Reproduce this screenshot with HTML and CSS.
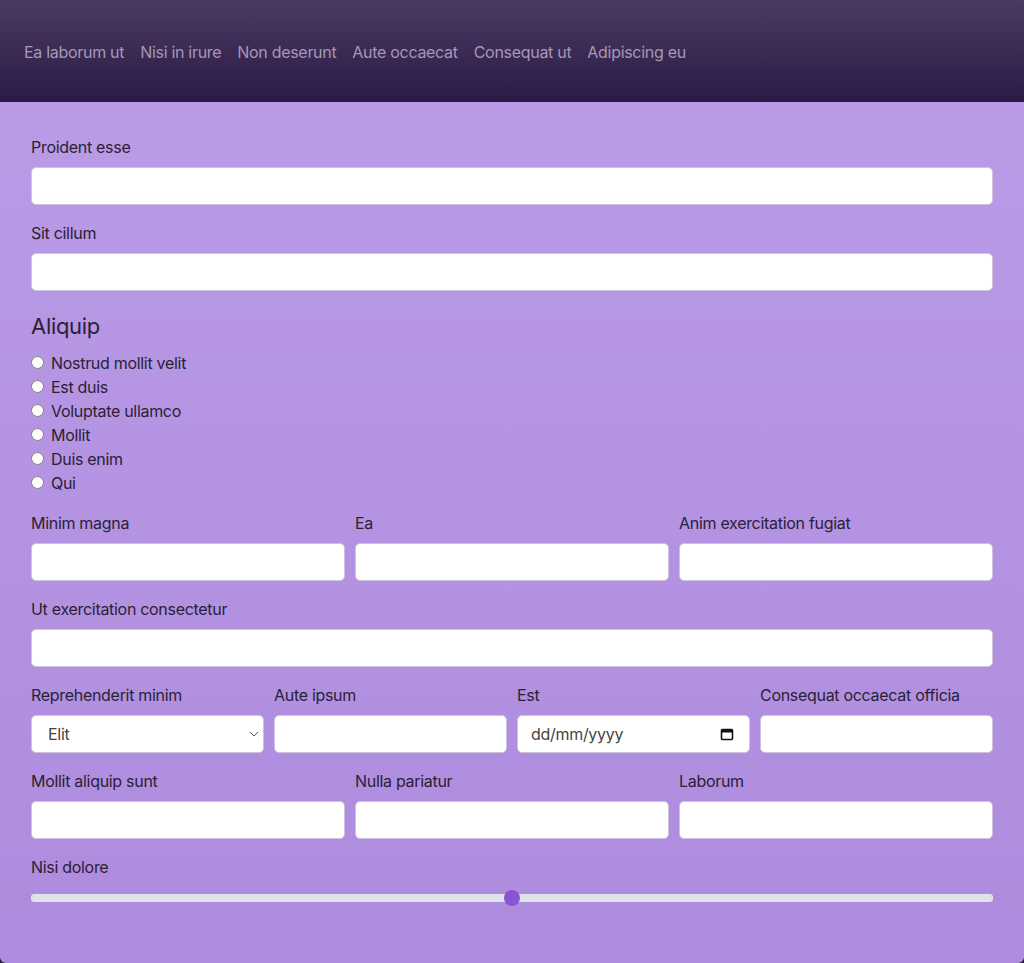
FILE: index.html
```html
<!DOCTYPE html>
<html lang="en">
<head>
<meta charset="utf-8">
<title>Form</title>
<link rel="stylesheet" href="styles.css">
</head>
<body>
<header class="topbar">
  <nav class="nav">
    <a href="#">Ea laborum ut</a>
    <a href="#">Nisi in irure</a>
    <a href="#">Non deserunt</a>
    <a href="#">Aute occaecat</a>
    <a href="#">Consequat ut</a>
    <a href="#">Adipiscing eu</a>
  </nav>
</header>
<main class="panel">
  <form class="form">
    <div class="field">
      <label class="label">Proident esse</label>
      <input class="input" type="text">
    </div>
    <div class="field">
      <label class="label">Sit cillum</label>
      <input class="input" type="text">
    </div>
    <fieldset class="group">
      <legend class="heading">Aliquip</legend>
      <label class="radio"><input type="radio" name="r"><span>Nostrud mollit velit</span></label>
      <label class="radio"><input type="radio" name="r"><span>Est duis</span></label>
      <label class="radio"><input type="radio" name="r"><span>Voluptate ullamco</span></label>
      <label class="radio"><input type="radio" name="r"><span>Mollit</span></label>
      <label class="radio"><input type="radio" name="r"><span>Duis enim</span></label>
      <label class="radio"><input type="radio" name="r"><span>Qui</span></label>
    </fieldset>
    <div class="row cols-3">
      <div class="field"><label class="label">Minim magna</label><input class="input" type="text"></div>
      <div class="field"><label class="label">Ea</label><input class="input" type="text"></div>
      <div class="field"><label class="label">Anim exercitation fugiat</label><input class="input" type="text"></div>
    </div>
    <div class="field">
      <label class="label">Ut exercitation consectetur</label>
      <input class="input" type="text">
    </div>
    <div class="row cols-4">
      <div class="field">
        <label class="label">Reprehenderit minim</label>
        <div class="select-wrap">
          <select class="input select"><option>Elit</option></select>
          <svg class="chev" width="10" height="6" viewBox="0 0 10 6"><path d="M1 1l4 4 4-4" fill="none" stroke="#555" stroke-width="1"/></svg>
        </div>
      </div>
      <div class="field"><label class="label">Aute ipsum</label><input class="input" type="text"></div>
      <div class="field">
        <label class="label">Est</label>
        <div class="date-wrap">
          <input class="input date" type="text" placeholder="dd/mm/yyyy">
          <svg class="cal" width="14" height="14" viewBox="0 0 14 14"><rect x="1.5" y="2.5" width="11" height="10" rx="1" fill="none" stroke="#111" stroke-width="1.6"/><rect x="1.5" y="2.5" width="11" height="3" fill="#111"/></svg>
        </div>
      </div>
      <div class="field"><label class="label">Consequat occaecat officia</label><input class="input" type="text"></div>
    </div>
    <div class="row cols-3">
      <div class="field"><label class="label">Mollit aliquip sunt</label><input class="input" type="text"></div>
      <div class="field"><label class="label">Nulla pariatur</label><input class="input" type="text"></div>
      <div class="field"><label class="label">Laborum</label><input class="input" type="text"></div>
    </div>
    <div class="field">
      <label class="label">Nisi dolore</label>
      <input class="range" type="range" min="0" max="100" value="50">
    </div>
  </form>
</main>
</body>
</html>
```
FILE: styles.css
```css
* { box-sizing: border-box; }
html, body { margin: 0; padding: 0; }
body {
  min-height: 100vh;
  display: flex;
  flex-direction: column;
  background: #2b1a45;
  font-family: Inter, "Noto Sans", "Liberation Sans", sans-serif;
  font-size: 16px;
  letter-spacing: -0.3px;
  color: #2a2136;
}
.topbar {
  height: 102px;
  display: flex;
  align-items: center;
  padding: 2px 24px 0 24px;
  background: linear-gradient(to bottom, #4b3a63, #2b1a45);
  border-radius: 0 0 4px 4px;
}
.nav { display: flex; gap: 16px; }
.nav a {
  color: #a797b8;
  text-decoration: none;
  font-size: 16px;
  line-height: 24px;
}
.panel {
  flex: 1;
  padding: 33px 31px 32px 31px;
  background: linear-gradient(to bottom, #b99be6, #ae8bde);
  border-radius: 0 0 6px 6px;
}
.form { display: flex; flex-direction: column; gap: 16px; }
.field { display: flex; flex-direction: column; min-width: 0; }
.label {
  line-height: 24px;
  margin-bottom: 8px;
  color: #2a2136;
}
.input {
  width: 100%;
  height: 38px;
  border: 1px solid #cdc3db;
  border-radius: 5px;
  background: #fff;
  font-family: inherit;
  font-size: 16px;
  letter-spacing: -0.3px;
  padding: 0 16px;
  color: #333;
  outline: none;
}
.group { border: 0; margin: 0; padding: 0; display: flex; flex-direction: column; }
.heading {
  padding: 0;
  font-size: 22px;
  line-height: 38px;
  margin-bottom: 6px;
  color: #2a2136;
}
.radio {
  display: flex;
  align-items: center;
  height: 24px;
  line-height: 24px;
}
.radio input {
  width: 13px;
  height: 13px;
  margin: -2px 7px 0 0;
}
.row { display: grid; gap: 10px; }
.cols-3 { grid-template-columns: repeat(3, 1fr); }
.cols-4 { grid-template-columns: repeat(4, 1fr); }
.select-wrap, .date-wrap { position: relative; }
.select {
  appearance: none;
  -webkit-appearance: none;
  color: #444;
}
.chev { position: absolute; right: 5px; top: 16px; pointer-events: none; }
.date { padding-left: 13px; }
.date::placeholder { color: #444; opacity: 1; }
.cal { position: absolute; right: 16px; top: 12px; pointer-events: none; }
.range {
  -webkit-appearance: none;
  appearance: none;
  width: 100%;
  height: 8px;
  margin: 7px 0 0 0;
  border-radius: 4px;
  background: #dfe2e8;
  outline: none;
}
.range::-webkit-slider-runnable-track {
  height: 8px;
  border-radius: 4px;
  background: #dfe2e8;
}
.range::-webkit-slider-thumb {
  -webkit-appearance: none;
  width: 16px;
  height: 16px;
  margin-top: -4px;
  border-radius: 50%;
  background: #8a55d0;
  border: 0;
}
```
